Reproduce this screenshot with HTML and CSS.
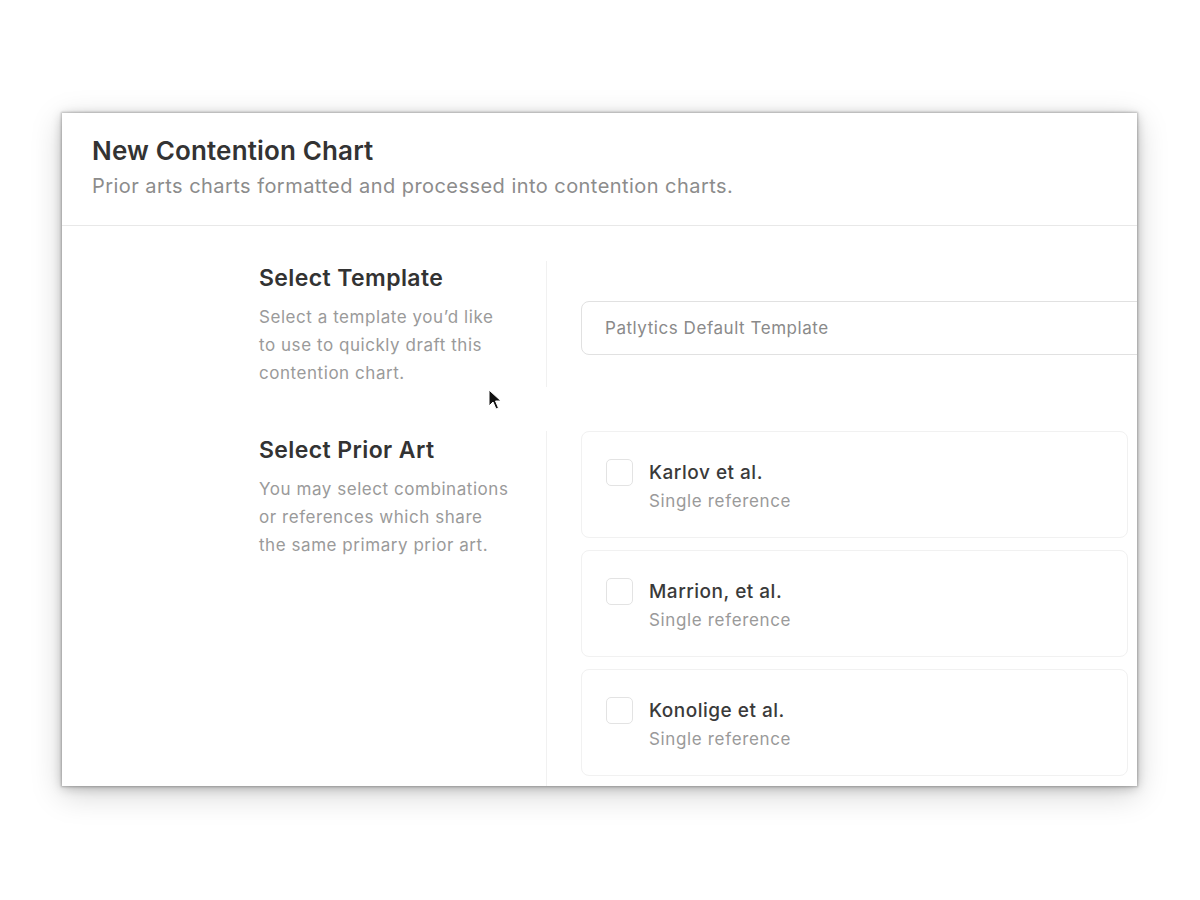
FILE: index.html
```html
<!DOCTYPE html>
<html lang="en">
<head>
<meta charset="utf-8">
<title>New Contention Chart</title>
<link rel="stylesheet" href="styles.css">
</head>
<body>
<div class="stage">
  <div class="panel">
    <header class="panel-head">
      <h1 class="panel-title">New Contention Chart</h1>
      <p class="panel-sub">Prior arts charts formatted and processed into contention charts.</p>
    </header>
    <div class="panel-body">
      <section class="row">
        <div class="row-label">
          <h2 class="label-title">Select Template</h2>
          <p class="label-desc">Select a template you’d like to use to quickly draft this contention chart.</p>
        </div>
        <div class="row-field">
          <div class="select">Patlytics Default Template</div>
        </div>
      </section>
      <section class="row row-art">
        <div class="row-label">
          <h2 class="label-title">Select Prior Art</h2>
          <p class="label-desc">You may select combinations or references which share the same primary prior art.</p>
        </div>
        <div class="row-field art-list">
          <label class="art">
            <span class="check"></span>
            <span class="art-text">
              <span class="art-name">Karlov et al.</span>
              <span class="art-kind">Single reference</span>
            </span>
          </label>
          <label class="art">
            <span class="check"></span>
            <span class="art-text">
              <span class="art-name">Marrion, et al.</span>
              <span class="art-kind">Single reference</span>
            </span>
          </label>
          <label class="art">
            <span class="check"></span>
            <span class="art-text">
              <span class="art-name">Konolige et al.</span>
              <span class="art-kind">Single reference</span>
            </span>
          </label>
        </div>
      </section>
    </div>
  </div>
  <svg class="cursor" width="14" height="22" viewBox="0 0 14 22" aria-hidden="true">
    <path d="M1 1 L1 17 L5 13 L8 20 L10.5 19 L7.5 12 L13 12 Z" fill="#111" stroke="#fff" stroke-width="1"/>
  </svg>
</div>
</body>
</html>
```

FILE: styles.css
```css
* { box-sizing: border-box; }

html, body {
  margin: 0;
  padding: 0;
  background: #ffffff;
}

body {
  font-family: Inter, "Noto Sans", "Liberation Sans", sans-serif;
  color: #333333;
}

.stage {
  position: relative;
  width: 1200px;
  height: 900px;
  padding: 113px 0 0 62px;
}

.panel {
  width: 1075px;
  height: 673px;
  background: #ffffff;
  overflow: hidden;
  box-shadow: 0 0 2px 1px rgba(0, 0, 0, 0.22),
              0 2px 10px rgba(0, 0, 0, 0.22),
              0 8px 30px rgba(0, 0, 0, 0.18);
}

.panel-head {
  height: 113px;
  padding: 22px 30px 0;
  border-bottom: 1px solid #e8e8e8;
}

.panel-title {
  margin: 0;
  font-size: 26px;
  line-height: 32px;
  font-weight: 600;
  color: #333333;
  letter-spacing: 0.15px;
}

.panel-sub {
  margin: 5px 0 0;
  font-size: 20px;
  line-height: 28px;
  color: #8c8c8c;
  letter-spacing: 0.45px;
}

.panel-body {
  padding: 35px 0 0 197px;
}

.row {
  display: flex;
}

.row-art {
  margin-top: 44px;
}

.row-label {
  width: 288px;
  flex: none;
  padding: 2px 33px 0 0;
  border-right: 1px solid #f1f1f1;
}

.row-art .row-label {
  padding-top: 4px;
  height: 360px;
}

.label-title {
  margin: 0;
  font-size: 23px;
  line-height: 30px;
  font-weight: 600;
  color: #333333;
  letter-spacing: 0.4px;
}

.label-desc {
  margin: 10px 0 0;
  font-size: 17px;
  line-height: 28px;
  color: #9a9a9a;
  letter-spacing: 0.55px;
}

.row-field {
  flex: 1;
  padding-left: 34px;
}

.select {
  margin-top: 40px;
  width: 600px;
  height: 54px;
  padding: 0 23px;
  display: flex;
  align-items: center;
  border: 1px solid #e1e1e1;
  border-radius: 8px;
  font-size: 17px;
  color: #8a8a8a;
  letter-spacing: 0.55px;
}

.art-list {
  display: flex;
  flex-direction: column;
  gap: 12px;
  padding-right: 9px;
}

.art {
  display: flex;
  align-items: flex-start;
  gap: 16px;
  height: 107px;
  padding: 27px 24px 0;
  border: 1px solid #f1f1f1;
  border-radius: 8px;
}

.check {
  flex: none;
  width: 27px;
  height: 27px;
  border: 1.5px solid #e3e3e3;
  border-radius: 5px;
  background: #ffffff;
}

.art-text {
  display: flex;
  flex-direction: column;
}

.art-name {
  font-size: 19px;
  line-height: 27px;
  font-weight: 500;
  color: #3a3a3a;
  letter-spacing: 0.5px;
}

.art-kind {
  font-size: 17px;
  line-height: 30px;
  color: #9a9a9a;
  letter-spacing: 0.65px;
}

.cursor {
  position: absolute;
  left: 488px;
  top: 389px;
}
```
